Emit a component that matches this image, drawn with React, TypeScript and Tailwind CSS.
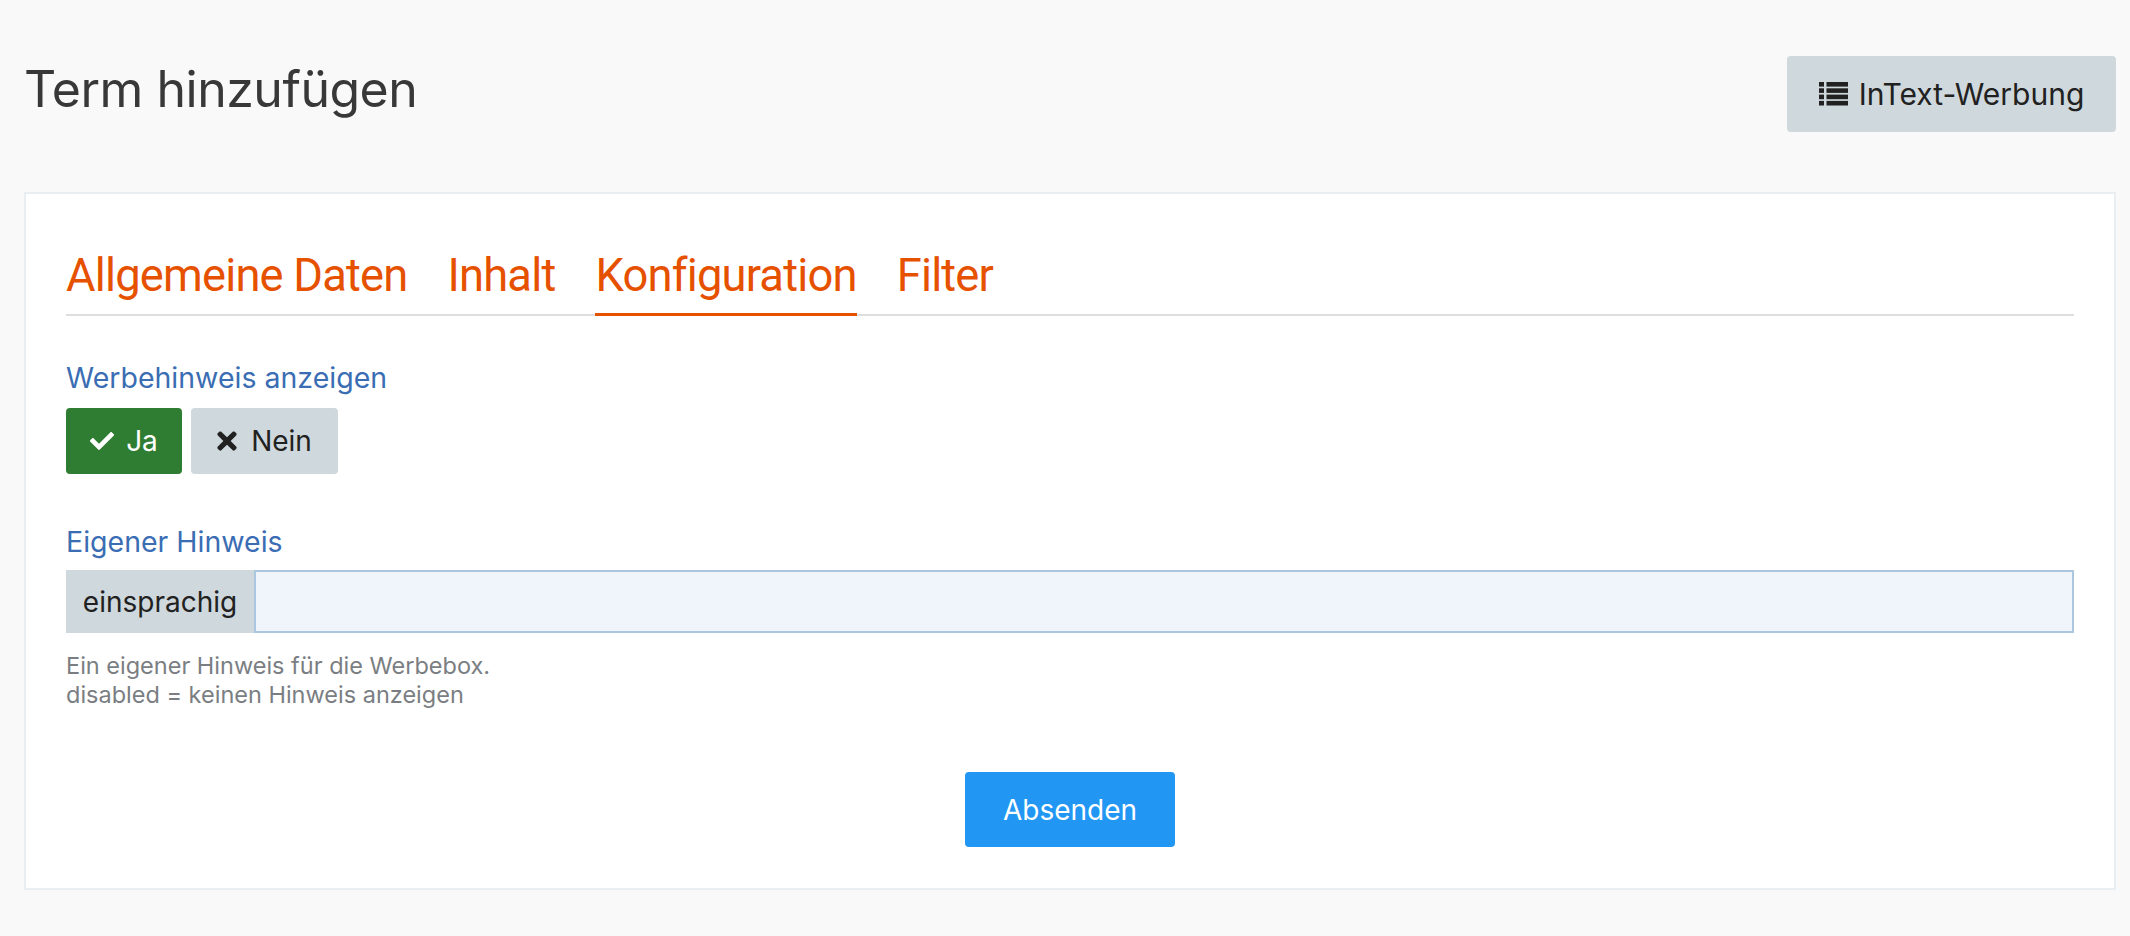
import { FaCheck, FaTimes } from "react-icons/fa"

const tabs = ["Allgemeine Daten", "Inhalt", "Konfiguration", "Filter"]

// four-row list glyph: square bullets with bars
function ListIcon() {
  const rows = [0, 1, 2, 3]
  return (
    <svg width="29" height="24" viewBox="0 0 29 24" fill="currentColor">
      {rows.map((r) => (
        <g key={r}>
          <rect x="0" y={r * 6.3} width="5" height="4.6" />
          <rect x="7.5" y={r * 6.3} width="21.5" height="4.6" />
        </g>
      ))}
    </svg>
  )
}

export default function App() {
  const active = "Konfiguration"

  return (
    <div className="min-h-screen bg-[#f9f9f9] pl-[24px] pr-[14px] font-['Inter',sans-serif] text-[#212121]">
      {/* Page header */}
      <div className="flex items-start justify-between pt-[56px] h-[192px]">
        <h1 className="-mt-[2px] text-[50px] leading-[70px] tracking-[-0.5px] text-[#383838]">
          Term hinzufügen
        </h1>
        <button className="flex h-[76px] w-[329px] items-center justify-center gap-[11px] rounded-[4px] bg-[#cfd8dc] text-[30px] text-[#212121]">
          <ListIcon />
          InText-Werbung
        </button>
      </div>

      {/* Form card */}
      <div className="border-2 border-[#e9eef3] bg-white px-[40px] pb-[41px] pt-[52px]">
        <nav className="flex border-b-2 border-[#dedede] font-['Roboto',sans-serif] text-[45.3px] tracking-[-0.8px] text-[#e65100]">
          {tabs.map((t) => (
            <div
              key={t}
              className={`mr-[40px] pb-[7px] leading-[60px] ${
                t === active ? "-mb-[2px] border-b-[3px] border-[#e65100]" : ""
              }`}
            >
              {t}
            </div>
          ))}
        </nav>

        <div className="mt-[44px] text-[28.5px] leading-[36px] text-[#3a6db3]">Werbehinweis anzeigen</div>
        <div className="mt-[12px] flex gap-[9px]">
          <button className="flex h-[66px] w-[116px] items-center justify-center gap-[12px] rounded-[4px] bg-[#2e7d32] text-[28px] text-white">
            <FaCheck className="h-[24px] w-[24px]" />
            Ja
          </button>
          <button className="flex h-[66px] w-[147px] items-center justify-center gap-[14px] rounded-[4px] bg-[#cfd8dc] text-[28px] text-[#212121]">
            <FaTimes className="h-[28px] w-[20px]" />
            Nein
          </button>
        </div>

        <div className="mt-[50px] text-[28.5px] leading-[36px] text-[#3a6db3]">Eigener Hinweis</div>
        <div className="mt-[10px] flex h-[63px]">
          <span className="flex w-[188px] items-center justify-center bg-[#cfd8dc] text-[28px]">einsprachig</span>
          <input
            type="text"
            className="flex-1 border-2 border-[#abc7e0] bg-[#eff5fa] px-3 text-[28px] outline-none"
          />
        </div>
        <p className="mt-[18px] text-[23.5px] leading-[29px] text-[#7a7e82]">
          Ein eigener Hinweis für die Werbebox.
          <br />
          disabled = keinen Hinweis anzeigen
        </p>

        <div className="mt-[63px] flex justify-center">
          <button className="h-[75px] w-[210px] rounded-[4px] bg-[#2196f3] text-[28px] text-white">Absenden</button>
        </div>
      </div>
    </div>
  )
}
